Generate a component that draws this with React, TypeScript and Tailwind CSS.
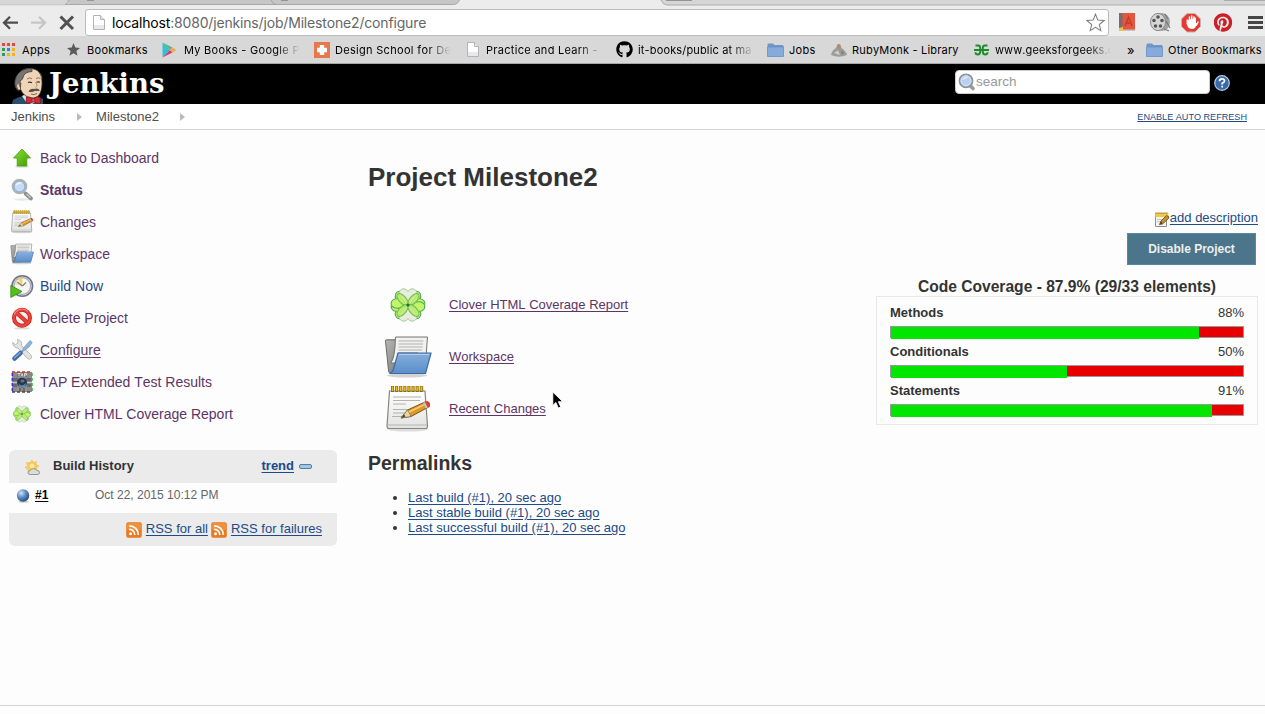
import React from "react";
import { FaGithub, FaPinterest } from "react-icons/fa";

const ArrowUp = () => (
  <svg viewBox="0 0 24 24" className="size-6">
    <defs>
      <linearGradient id="up" x1="0" y1="0" x2="1" y2="1">
        <stop offset="0" stopColor="#8ae234" />
        <stop offset="1" stopColor="#3f9a06" />
      </linearGradient>
    </defs>
    <ellipse cx="12" cy="20.5" rx="7" ry="1.3" fill="#ddd" />
    <path d="M12 3 L20.5 12 H16.8 V20 H7.2 V12 H3.5 Z" fill="url(#up)" stroke="#4e9a06" strokeWidth=".8" />
  </svg>
);

const Magnifier = ({ className }: { className: string }) => (
  <svg viewBox="0 0 24 24" className={className}>
    <ellipse cx="12" cy="21.5" rx="8" ry="1.2" fill="#e6e6e6" />
    <path d="M15.5 15.5 L21 20.5" stroke="#8d8f8a" strokeWidth="3.8" strokeLinecap="round" />
    <path d="M16.5 16 L20.6 19.8" stroke="#c9cbc6" strokeWidth="1.2" />
    <circle cx="9.5" cy="8.5" r="6.8" fill="#bcd6f2" stroke="#b0b2ae" strokeWidth="2" />
    <circle cx="9.5" cy="8.5" r="5.4" fill="#c6dcf5" stroke="#7fa2d0" strokeWidth=".9" />
    <path d="M5.5 8 A4.4 4.4 0 0 1 12.5 5 Q8 6 5.5 8Z" fill="#eef5fd" />
  </svg>
);

const SearchLens = () => (
  <svg viewBox="0 0 18 18" className="size-[18px]">
    <path d="M11.500 12 L15 15.500" stroke="#9b9c9a" strokeWidth="3.600" strokeLinecap="round" />
    <circle cx="8" cy="7.800" r="6.500" fill="#a9c8ef" stroke="#8e9396" strokeWidth="1.800" />
    <circle cx="8" cy="7.800" r="5" fill="#b5d2f5" stroke="#dfe9f5" strokeWidth="1" />
    <path d="M4.500 7 A4 4 0 0 1 10.500 4.500 Q7 5 4.500 7Z" fill="#e6f1fd" />
  </svg>
);

const Notepad = ({ className }: { className: string }) => (
  <svg viewBox="0 0 48 48" className={className}>
    <defs>
      <linearGradient id="paper" x1="0" y1="0" x2="0" y2="1">
        <stop offset="0" stopColor="#ffffff" />
        <stop offset="1" stopColor="#e2e2e0" />
      </linearGradient>
    </defs>
    <ellipse cx="24" cy="44.5" rx="20" ry="2" fill="#ddd" />
    <path d="M5.5 6 H41 L43.5 41 Q43.6 43.5 41.5 43.5 H5 Q3 43.5 3 41 Z" fill="url(#paper)" stroke="#858783" strokeWidth="1.2" />
    <path d="M3.5 40 H43" stroke="#b5b5b2" />
    <path d="M9 12H37M9 15.5H36M9 19H22M9 24.500H35M9 28H24M8 31.500H20" stroke="#b2b4b0" strokeWidth="1.1" />
    <path d="M7 4H40" stroke="#8f6d00" strokeWidth="6" strokeDasharray="3.100 1" />
    <path d="M7.800 3.800H40" stroke="#e3bd2c" strokeWidth="4.500" strokeDasharray="1.500 2.600" />
    <path d="M17 33 L23.500 25 L41 17 Q46 17 45.500 21.500 L27 31.500 Z" fill="#d99a28" stroke="#855016" />
    <path d="M17 33 L23.500 25 L25 27.500 L27 31.500Z" fill="#edd4a5" stroke="#6d6657" strokeWidth=".6" />
    <path d="M17 33 L20 29.500 L21.500 31.500Z" fill="#3a3a3a" />
    <path d="M40.500 17 L43.500 16 Q46.500 17 46 21 L43.500 22.800Z" fill="#e23c2a" />
    <path d="M38.800 18 L40.800 17 L43.800 22.500 L42 23.500Z" fill="#c3c6c8" />
    <path d="M25 27 L39.500 20" stroke="#f5cc72" strokeWidth="1.700" />
  </svg>
);

const EditNote = () => (
  <svg viewBox="0 0 16 16" className="mt-[3px] size-4">
    <path d="M1.500 1.500H12.500V14.500H1.500Z" fill="#f3f3f0" stroke="#8f918d" />
    <path d="M1 1.200H14.500V5H1.500Z" fill="#edc94a" />
    <path d="M1.500 1H14" stroke="#a97f10" strokeWidth="1.500" strokeDasharray="1 1" />
    <path d="M3 7.500H9M3 9.500H7" stroke="#bbb" strokeWidth=".8" />
    <path d="M5.500 12.500 L7 9 L12.500 3.500 Q15.500 4 14.500 6.500 L8.500 12Z" fill="#c98d35" stroke="#6b4a1c" strokeWidth=".8" />
    <path d="M5.500 12.500 L7 9 L8.800 11.500Z" fill="#4c4538" />
  </svg>
);

const Folder = ({ className }: { className: string }) => (
  <svg viewBox="0 0 48 48" className={className}>
    <defs>
      <linearGradient id="blue" x1="0" y1="0" x2="0" y2="1">
        <stop offset="0" stopColor="#86aedb" />
        <stop offset="1" stopColor="#5b8ecb" />
      </linearGradient>
      <linearGradient id="grey" x1="0" y1="0" x2="1" y2="1">
        <stop offset="0" stopColor="#b9bab8" />
        <stop offset="1" stopColor="#727471" />
      </linearGradient>
    </defs>
    <ellipse cx="23" cy="42.500" rx="20" ry="2" fill="#d4d4d4" />
    <path d="M1.500 8 Q1.500 6.800 2.800 6.800 L14 6.800 L15 5 H21 V40 H6.500 Q4.800 40 4.600 38.500Z" fill="url(#grey)" stroke="#686a67" />
    <path d="M11.500 4 H43.500 L42 24 L40 30 H6.500 Q11 26 11.500 4Z" fill="#f1f1f0" stroke="#737572" />
    <path d="M14.500 8H39.500M14.500 11H39M14.500 14H38.500M14.500 17H38M14 19.500H34" stroke="#b1b3af" strokeWidth="1.200" />
    <path d="M14 20 H47 L41.500 40.500 H5.500 Q9 39 9.800 35 Z" fill="url(#blue)" stroke="#3c6ba5" strokeWidth="1.200" />
    <path d="M15 21.500H45" stroke="#b3cdea" />
  </svg>
);

const BuildNow = () => (
  <svg viewBox="0 0 24 24" className="size-6">
    <circle cx="12.300" cy="12" r="10.300" fill="#d9dae2" stroke="#6f7284" strokeWidth="1.500" />
    <circle cx="12.300" cy="12" r="8.300" fill="#f6f6f1" stroke="#a9abbb" strokeWidth="1.200" />
    <path d="M12.300 12 L8 4.800 Q10 3.800 12.300 3.800Z" fill="#f0d35c" />
    <path d="M12.300 12 L4.500 10 L6.500 6.300Z" fill="#e9dfae" />
    <path d="M12.300 12 L16 8.500 M12.300 12 L7.500 8" stroke="#7c7d78" strokeWidth="1.200" />
    <path d="M.8 11.500 L12 17.500 L.8 23.500Z" fill="#55bf1c" stroke="#398a0b" strokeWidth=".8" />
  </svg>
);

const Forbidden = () => (
  <svg viewBox="0 0 24 24" className="size-6">
    <ellipse cx="12" cy="22.300" rx="8" ry="1.200" fill="#ddd" />
    <circle cx="12" cy="11.800" r="8" fill="#f3eeee" stroke="#c41e17" strokeWidth="4" />
    <path d="M6.500 6.800 L17.500 16.800" stroke="#c41e17" strokeWidth="4" />
    <circle cx="12" cy="11.800" r="8" fill="none" stroke="#e8443b" strokeWidth="2.600" />
    <path d="M6.500 6.800 L17.500 16.800" stroke="#e8443b" strokeWidth="2.600" />
    <path d="M4.300 8.500 A8.300 8.300 0 0 1 18 5.500" fill="none" stroke="#f48b85" strokeWidth="1.200" />
  </svg>
);

const Tools = () => (
  <svg viewBox="0 0 24 24" className="size-6">
    <path d="M2.500 4.500 L5.500 6.500 L8 5 L7.500 1.500 Q12.500 2.500 11.500 7.500 L20.500 16.500 Q23 19.500 20.500 21 Q18.500 22 16.500 19.500 L8 10 Q3.500 10 2.500 4.500Z" fill="#e2e4e1" stroke="#a9aba7" strokeWidth=".8" />
    <path d="M20 2.500 L22.300 4.500 L19 9 L14.500 12.500 L12.800 11 L16.500 6.500Z" fill="#8fb2da" stroke="#7692b8" strokeWidth=".7" />
    <path d="M13.500 12 L9 16.500" stroke="#8b9fb5" strokeWidth="1.800" />
    <path d="M10.500 15 L4.500 20.500" stroke="#426fa6" strokeWidth="4.600" strokeLinecap="round" />
    <path d="M10 14.800 L4.500 19.800" stroke="#7fa7d6" strokeWidth="1.500" strokeLinecap="round" />
  </svg>
);

const Tap = () => (
  <svg viewBox="0 0 24 24" className="size-6">
    <rect x="2" y="2" width="20" height="20" fill="#8b8b8b" />
    <path d="M3 8h5v3H3zM16 8h5v3h-5zM3 14h4v3H3zM17 14h4v3h-4zM7 18h4v3H7zM13 18h4v3h-4z" fill="#686868" />
    <path d="M2 12.500h5M17 12.500h5M8 21v-3M16 21v-3" stroke="#c4c4c4" />
    <rect x="7" y="2.500" width="10" height="4.500" fill="#777" />
    <path d="M7.500 3.500h3M9 3.500v3M11 6.500l1-3 1 3M14.500 6.500v-3h2v1.500h-2" stroke="#eee" strokeWidth=".8" fill="none" />
    <ellipse cx="12" cy="12.500" rx="5" ry="4.800" fill="#203955" />
    <ellipse cx="12.500" cy="11" rx="2" ry="1.500" fill="#7f6c68" />
    <path d="M8.500 13.500 Q12 17.500 16 13 L15 17 H9.500Z" fill="#6289b0" />
    <path d="M2 2H22" stroke="#d4322a" strokeWidth="1.500" strokeDasharray="3 2" />
    <path d="M2 22H22" stroke="#444" strokeWidth="1.300" strokeDasharray="3 2" />
    <path d="M2.300 3V22" stroke="#3434d8" strokeWidth="1.500" strokeDasharray="3 2" />
    <path d="M22 3V22" stroke="#2cb834" strokeWidth="1.500" strokeDasharray="3 2" />
  </svg>
);

const Leaf = ({ turn, fill, stroke }: { turn: number; fill: string; stroke: string }) => (
  <path
    transform={`rotate(${turn} 24 24)`}
    d="M24 24 C17 19 14 14 15.500 10.500 C17.500 6.500 22.500 7.500 24 10.500 C25.500 7.500 30.500 6.500 32.500 10.500 C34 14 31 19 24 24Z"
    fill={fill}
    stroke={stroke}
    strokeWidth="1"
  />
);

const Clover = ({ className }: { className: string }) => (
  <svg viewBox="0 0 48 48" className={className}>
    {[62, 118, 242, 298].map((a) => (
      <Leaf key={a} turn={a} fill="#c3f56b" stroke="#4fa84e" />
    ))}
    {[0, 180].map((a) => (
      <Leaf key={a} turn={a} fill="#e7edda" stroke="#9cca9e" />
    ))}
    <g fill="#bdeb6c" fillOpacity=".8" stroke="#69bb55" strokeWidth="1">
      <ellipse cx="18.500" cy="18.500" rx="3.600" ry="7.200" transform="rotate(-42 18.500 18.500)" />
      <ellipse cx="29.500" cy="18.500" rx="3.600" ry="7.200" transform="rotate(42 29.500 18.500)" />
      <ellipse cx="18.500" cy="29.500" rx="3.600" ry="7.200" transform="rotate(42 18.500 29.500)" />
      <ellipse cx="29.500" cy="29.500" rx="3.600" ry="7.200" transform="rotate(-42 29.500 29.500)" />
    </g>
    <circle cx="24" cy="24" r="1.600" fill="#177b2c" />
  </svg>
);

const Rss = () => (
  <svg viewBox="0 0 16 16" className="size-4">
    <rect x=".2" y=".2" width="15.600" height="15.600" rx="2" fill="#e87a22" />
    <rect x="1" y="1" width="14" height="7" rx="2" fill="#f1a04d" opacity=".6" />
    <circle cx="4.500" cy="11.700" r="1.500" fill="#fff" />
    <path d="M3.200 7.300 A5.600 5.600 0 0 1 8.800 12.900M3.200 3.800 A9.100 9.100 0 0 1 12.300 12.900" fill="none" stroke="#fff" strokeWidth="1.700" />
  </svg>
);

const Weather = () => (
  <svg viewBox="0 0 16 16" className="mt-[2px] size-4">
    <path d="M7 0 L8.300 2.500 L11.500 1.500 L11 4.500 L14 6 L11.500 8 L12 11 H3 L2.500 9 L0 7.500 L2.300 5.700 L1.500 2.500 L5 2.700Z" fill="#f7d168" stroke="#eeb53f" strokeWidth=".5" />
    <circle cx="7" cy="6" r="3.200" fill="#fce99b" stroke="#eeb437" strokeWidth=".8" />
    <path d="M5 14.500 Q3 14.500 3 12.500 Q3 10.800 5 10.800 Q6 8.300 8.500 8.800 Q11 8.300 11.800 10.500 Q14.500 10.300 14.500 12.600 Q14.500 14.500 12.500 14.500Z" fill="#dcdddb" stroke="#8a8c88" strokeWidth=".9" />
  </svg>
);

const Ball = () => (
  <svg viewBox="0 0 16 16" className="size-[15px]">
    <defs>
      <radialGradient id="ball" cx=".35" cy=".3" r=".75">
        <stop offset="0" stopColor="#d4e5f7" />
        <stop offset=".4" stopColor="#6f9bd0" />
        <stop offset="1" stopColor="#1f4679" />
      </radialGradient>
    </defs>
    <ellipse cx="8" cy="14.500" rx="5.500" ry="1.300" fill="#ccc" />
    <circle cx="7.500" cy="8" r="6.600" fill="url(#ball)" />
  </svg>
);

const Head = () => (
  <svg viewBox="0 0 34 36" className="h-9 w-[34px]">
    <path d="M0 36 L1 32 Q6 29 11 28 L26 29 L31 31 L31 36Z" fill="#294f6c" />
    <path d="M10 28 L14 34 L20 36 L25 33 L26 28 L18 24Z" fill="#dfe3e4" />
    <path d="M5 11 C6 3 12 .5 18 .5 C26 .5 30 6 30 13 C30.500 22 28 30 21 30 C14 30 9 25 8 19Z" fill="#efd5b5" stroke="#39322c" strokeWidth=".8" />
    <path d="M20 .5 C10 0 3 6 2.800 15 Q3 21 6.500 22.500 L8.500 19 Q9.500 15 7.800 13 Q11 12 11.500 8 Q13 4 20 3.500Z" fill="#777472" stroke="#3f3d3b" strokeWidth=".8" />
    <path d="M27 4 Q31 7 30 13 L28.500 8Z" fill="#6d6a67" />
    <path d="M6 15 Q3.500 17 5.500 21 Q7 23 8.500 21.500" fill="#efd5b5" stroke="#5b4a3b" strokeWidth=".7" />
    <path d="M15 11 Q18 8.800 20 10.800M24 10.500 Q26.500 9 28.500 10.500" fill="none" stroke="#6b5b4b" strokeWidth=".8" />
    <path d="M16 14.500 Q18 13.500 20 14.800M24.500 14.300 Q26 13.500 28 14.300" fill="none" stroke="#3b332b" strokeWidth="1.200" />
    <path d="M23.500 14 Q26.500 18 23.500 19.500" fill="none" stroke="#b38f6b" strokeWidth="1" />
    <path d="M16.500 23.500 Q18 20 22 21 Q26 19.500 28 22.500 Q25 23.500 23 22.800 Q20 25 16.500 23.500Z" fill="#54504c" />
    <path d="M19 26 Q22 27.500 25 25.500" fill="none" stroke="#69493a" strokeWidth=".8" />
    <path d="M14.500 29 Q18 28.500 21 31 Q24 28 28 29 L28.500 35.500 Q24 36 21.500 33.500 Q18 36 14 35Z" fill="#d62b35" stroke="#761a20" strokeWidth=".8" />
    <circle cx="21.300" cy="32.300" r="1.900" fill="#e8444c" stroke="#761a20" strokeWidth=".6" />
  </svg>
);

const Page = ({ className }: { className: string }) => (
  <svg viewBox="0 0 12 15" className={className}>
    <path d="M.5 .5H7.500L11.500 4.500V14.500H.5Z" fill="#fdfdfd" stroke="#b3b3b3" />
    <path d="M7.500 .5V4.500H11.500" fill="#e9e9e9" stroke="#b3b3b3" />
    <path d="M1 10H11V14H1Z" fill="#e6e8ec" />
  </svg>
);

const MacFolder = () => (
  <svg viewBox="0 0 17 14" className="h-[14px] w-[17px]">
    <path d="M.5 1.500Q.5.5 1.500.5H6L7.500 2H15.500Q16.500 2 16.500 3V13.500H.5Z" fill="#6f96c8" />
    <path d="M.5 4H16.500V13.500H.5Z" fill="#84abdb" stroke="#6690c6" strokeWidth=".7" />
  </svg>
);

const AppsGrid = () => {
  const c = ["#e8453c", "#e8453c", "#e8453c", "#2e9e4f", "#3b7de8", "#f2b50f", "#2e9e4f", "#f2b50f", "#f2b50f"];
  return (
    <svg viewBox="0 0 13 13" className="size-[13px]">
      {c.map((f, i) => (
        <rect key={i} x={(i % 3) * 5} y={Math.floor(i / 3) * 5} width="3" height="3" fill={f} />
      ))}
    </svg>
  );
};

const Play = () => (
  <svg viewBox="0 0 15 16" className="h-4 w-[15px]">
    <path d="M.5 .5V15.500L8 8Z" fill="#35c1d2" />
    <path d="M.5 .5L8 8L10.500 5.500Z" fill="#59b583" />
    <path d="M.5 15.500L8 8L10.500 10.500Z" fill="#d83a6a" />
    <path d="M10.500 5.500L14.500 8L10.500 10.500L8 8Z" fill="#f2a553" />
  </svg>
);

const Cross = () => (
  <svg viewBox="0 0 16 16" className="size-4">
    <rect width="16" height="16" fill="#e8774c" />
    <path d="M5.800 3H10.200V5.800H13V10.200H10.200V13H5.800V10.200H3V5.800H5.800Z" fill="#fff" />
  </svg>
);

const Star = () => (
  <svg viewBox="0 0 24 24" className="size-[13px]">
    <path d="M12 0L15.300 8.300L24 9L17.300 14.800L19.500 23.500L12 18.700L4.500 23.500L6.700 14.800L0 9L8.700 8.300Z" fill="#5b5b5b" />
  </svg>
);

const Monk = () => (
  <svg viewBox="0 0 16 14" className="h-[14px] w-4">
    <path d="M0 12 Q1 7 5 5 L6.500 1 H9 L10.500 5 Q15 8 16 12 Q8 15.500 0 12Z" fill="#9c9c9a" />
    <path d="M6 3 Q8 0 10 3 L9 6 H7Z" fill="#b58b66" />
    <path d="M3 10 L7 7.500 L9 12Z" fill="#d1d0cc" />
    <path d="M10 7 L13 10 L11 12Z" fill="#7a7a78" />
  </svg>
);

const Geeks = () => (
  <svg viewBox="0 0 15 12" className="h-3 w-[15px]">
    <path d="M1.500 1.500H4.200Q6.200 1.500 6.200 4V7.500Q6.200 10.500 3.800 10.500Q1.500 10.500 1.500 8.200M0 6H15M13.500 1.500H10.800Q8.800 1.500 8.800 4V7.500Q8.800 10.500 11.200 10.500Q13.500 10.500 13.500 8.200" fill="none" stroke="#1d8a2b" strokeWidth="1.900" />
  </svg>
);

const plain = "w-[116px]";
const faded = "w-[116px] [mask-image:linear-gradient(to_right,black_80%,transparent_100%)]";

const bookmarks = [
  { icon: <AppsGrid />, label: "Apps", box: "w-[65px]", iconBox: "w-[20px]", text: "w-[40px]" },
  { icon: <Star />, label: "Bookmarks", box: "w-[95px]", iconBox: "w-[20px]", text: "w-[70px]" },
  { icon: <Play />, label: "My Books - Google P", box: "w-[152px]", iconBox: "w-[22px]", text: faded },
  { icon: <Cross />, label: "Design School for De", box: "w-[153px]", iconBox: "w-[21px]", text: faded },
  { icon: <Page className="h-[15px] w-3" />, label: "Practice and Learn -", box: "w-[149px]", iconBox: "w-[19px]", text: faded },
  { icon: <FaGithub className="size-[17px] text-black" />, label: "it-books/public at ma", box: "w-[151px]", iconBox: "w-[22px]", text: faded + " tracking-[0.15px]" },
  { icon: <MacFolder />, label: "Jobs", box: "w-[64px]", iconBox: "w-[22px]", text: "w-[40px]" },
  { icon: <Monk />, label: "RubyMonk - Library", box: "w-[143px]", iconBox: "w-[21px]", text: plain + " tracking-[0.2px]" },
  { icon: <Geeks />, label: "www.geeksforgeeks.c", box: "w-[153px]", iconBox: "w-[21px]", text: faded + " tracking-[0.1px]" },
];

const tasks = [
  { icon: <ArrowUp />, label: "Back to Dashboard", style: "text-[#5c3566]" },
  { icon: <Magnifier className="size-6" />, label: "Status", style: "text-[#5c3566] font-bold" },
  { icon: <Notepad className="size-6" />, label: "Changes", style: "text-[#5c3566]" },
  { icon: <Folder className="size-6" />, label: "Workspace", style: "text-[#5c3566]" },
  { icon: <BuildNow />, label: "Build Now", style: "text-[#204a87]" },
  { icon: <Forbidden />, label: "Delete Project", style: "text-[#5c3566]" },
  { icon: <Tools />, label: "Configure", style: "text-[#5c3566] underline underline-offset-2" },
  { icon: <Tap />, label: "TAP Extended Test Results", style: "text-[#5c3566]" },
  { icon: <Clover className="size-6" />, label: "Clover HTML Coverage Report", style: "text-[#5c3566]" },
];

const coverage = [
  { name: "Methods", label: "88%", px: 308 },
  { name: "Conditionals", label: "50%", px: 176 },
  { name: "Statements", label: "91%", px: 321 },
];

function Chrome() {
  return (
    <div className="h-16 overflow-hidden bg-[#d8d8d8] font-['Inter',sans-serif]">
      <svg viewBox="0 0 1265 9" className="block h-[9px] w-[1265px]">
        <rect width="1265" height="9" fill="#d6d6d6" />
        <path d="M67 0H460L455 5H70Z" fill="#c6c6c6" />
        <path d="M0 5H455Q458 4 460 0H661Q663 5 667 5H1265V9H0Z" fill="#ececec" />
        <path d="M0 4.800H66" stroke="#c4c4c4" strokeWidth=".8" />
        <path d="M69 0Q68 3.500 65 4.500H452Q458 4.500 459.500 0M661 0Q663 5 667 5H1265M271 0Q272 3.500 276 4.500M1224 .5H1265" fill="none" stroke="#a6a6a6" strokeWidth=".9" />
        <path d="M666 .5H692M87 .500H94M281 .5H288" stroke="#949494" />
      </svg>
      <div className="flex h-[27px] items-center bg-[#ececec]">
        <svg viewBox="0 0 85 27" className="h-[27px] w-[85px] shrink-0">
          <path d="M4 13.700H18M10 7.700L4 13.700L10 19.700" fill="none" stroke="#4f4f4f" strokeWidth="2.300" />
          <path d="M31 13.700H45M39 7.700L45 13.700L39 19.700" fill="none" stroke="#c6c6c6" strokeWidth="2.300" />
          <path d="M60.500 7.500L73 20M73 7.500L60.500 20" stroke="#505050" strokeWidth="3" />
        </svg>
        <div className="flex h-[27px] w-[1024px] shrink-0 items-center rounded-[3px] border border-[#bcbcbc] bg-white pl-[7px] text-[14px] leading-[25px]">
          <Page className="h-[15px] w-3" />
          <span className="ml-[7px] w-[974px] shrink-0 whitespace-nowrap tracking-[-0.170px] text-[#666]"><span className="text-black">localhost</span>:8080/jenkins/job/Milestone2/configure</span>
          <svg viewBox="0 0 24 24" className="size-[19px] shrink-0">
            <path d="M12 1.500L15 9L22.800 9.500L16.800 14.600L18.700 22.200L12 18L5.300 22.200L7.200 14.600L1.200 9.500L9 9Z" fill="#fff" stroke="#7c7c7c" strokeWidth="1.300" />
          </svg>
        </div>
        <svg viewBox="0 0 156 27" className="h-[27px] w-[156px] shrink-0">
          <rect x="10" y="4" width="16" height="18" fill="#e4573f" />
          <rect x="10" y="4" width="3.500" height="15" fill="#7b6b71" />
          <path d="M10 19L14 18L14 22H10Z" fill="#f4c33c" />
          <path d="M13.500 20.500H26V22H13.500Z" fill="#c8c3c0" />
          <path d="M16 17L19.500 8L23 17M17 14H22" fill="none" stroke="#c43c2a" strokeWidth="1.500" />
          <ellipse cx="53" cy="13" rx="8" ry="9" fill="#a3a3a3" />
          <ellipse cx="49" cy="13" rx="7.500" ry="8.600" fill="#d6d6d6" stroke="#888" />
          <g fill="#555"><circle cx="49" cy="8" r="1.800" /><circle cx="45" cy="11.500" r="1.800" /><circle cx="53" cy="11.500" r="1.800" /><circle cx="46.500" cy="17" r="1.800" /><circle cx="51.500" cy="17" r="1.800" /></g>
          <path d="M55 20L60 22M56 5L59 10M57 12L61 19" stroke="#777" strokeWidth="1.200" />
          <path d="M78.500 4.500H86.500L92 10V17.500L86.500 23H78.500L73 17.500V10Z" transform="translate(-.5 0)" fill="#e63a32" stroke="#c4b4b4" strokeWidth="1" />
          <path d="M78 11.500V15.500Q79 20 83 20Q86 20 87 17L88.500 14L87 14.500V8.500" fill="#fff" />
          <path d="M78.300 11V15M80.500 14V8M82.700 13.500V7M85 13.500V8M87.500 16L89 13" fill="none" stroke="#fff" strokeWidth="1.500" strokeLinecap="round" />
          <g transform="translate(104.500 4)">
            <FaPinterest size={19} color="#cb2027" />
          </g>
          <path d="M139 8.500H154M139 13.500H154M139 18.500H154" stroke="#454545" strokeWidth="3" />
        </svg>
      </div>
      <div className="flex h-7 items-center border-b border-[#a8a8a8] bg-[#d8d8d8] pl-[2px] text-[11px] leading-[16px] tracking-[0.3px] text-black">
        {bookmarks.map((b) => (
          <div key={b.label} className={`flex shrink-0 items-center ${b.box}`}>
            <div className={`flex shrink-0 items-center ${b.iconBox}`}>{b.icon}</div>
            <span className={`block shrink-0 whitespace-nowrap ${b.text}`}>{b.label}</span>
          </div>
        ))}
        <span className="w-[19px] shrink-0 text-[13px]">»</span>
        <div className="w-[22px] shrink-0"><MacFolder /></div>
        <span className="whitespace-nowrap tracking-[0.230px]">Other Bookmarks</span>
      </div>
    </div>
  );
}

function Sidebar() {
  return (
    <aside className="w-[368px] shrink-0 pt-3">
      <ul>
        {tasks.map((t) => (
          <li key={t.label} className="flex h-8 items-center pl-[10px]">
            {t.icon}
            <a className={`ml-[6px] text-[14px] leading-8 ${t.style}`}>{t.label}</a>
          </li>
        ))}
      </ul>
      <section className="ml-[9px] mt-5 w-[328px] overflow-hidden rounded-md bg-[#ebebeb]">
        <div className="flex h-[33px] items-center pl-4 pr-[25px]">
          <Weather />
          <b className="-mt-[2px] ml-3 flex-1 leading-[31px]">Build History</b>
          <a className="-mt-[2px] font-bold leading-[31px] text-[#204a87] underline underline-offset-2">trend</a>
          <div className="ml-[5px] h-[5px] w-[13px] rounded-[2px] border border-[#4d7fa8] bg-[#a6c4dc]" />
        </div>
        <div className="flex h-[30px] bg-[#fdfdfd] pl-[7px] pt-[5px] leading-[15px]">
          <Ball />
          <a className="ml-1 w-[60px] text-[12px] font-bold text-black underline underline-offset-2">#1</a>
          <span className="text-[12px] text-[#666]">Oct 22, 2015 10:12 PM</span>
        </div>
        <div className="flex h-[33px] items-center justify-end pr-[15px] leading-[31px] text-[#204a87]">
          <Rss />
          <a className="-mt-[2px] ml-1 mr-[3px] underline underline-offset-2">RSS for all</a>
          <Rss />
          <a className="-mt-[2px] ml-1 underline underline-offset-2">RSS for failures</a>
        </div>
      </section>
    </aside>
  );
}

export default function App() {
  return (
    <div className="relative h-[714px] w-[1265px] overflow-hidden bg-[#fdfdfd] font-['Liberation_Sans',Arial,sans-serif] text-[13px] text-[#333] [font-kerning:none]">
      <Chrome />
      <header className="flex h-10 items-center bg-black pl-[12px]">
        <div className="mt-1"><Head /></div>
        <span className="-mt-[3px] ml-[3px] flex-1 font-['DejaVu_Serif',serif] text-[27.500px] font-bold leading-[36px] text-white">Jenkins</span>
        <div className="mb-[4px] flex h-6 w-[255px] items-center rounded-[4px] border border-[#ccc] bg-white pl-[2px]">
          <SearchLens />
          <span className="text-[13.500px] text-[#999]">search</span>
        </div>
        <svg viewBox="0 0 16 16" className="mb-[2px] ml-1 mr-[35px] size-4">
          <circle cx="8" cy="8" r="7.300" fill="#3a6aa8" stroke="#b5cce8" strokeWidth="1.200" />
          <path d="M5.500 6.200Q5.500 3.800 8 3.800Q10.500 3.800 10.500 6Q10.500 7.300 8.200 8.300V9.500M8.200 10.800V12.500" fill="none" stroke="#fff" strokeWidth="1.700" />
        </svg>
      </header>
      <nav className="flex h-[26px] items-center border-b border-[#d3d3d3] bg-white pl-[11px] pr-[18px] leading-[24px] text-[#4d4d4d]">
        <span>Jenkins</span>
        <svg viewBox="0 0 5 8" className="ml-[22px] mr-[14px] h-2 w-[5px]"><path d="M0 0L5 4L0 8Z" fill="#bbb" /></svg>
        <span>Milestone2</span>
        <svg viewBox="0 0 5 8" className="ml-[21px] h-2 w-[5px]"><path d="M0 0L5 4L0 8Z" fill="#bbb" /></svg>
        <a className="ml-auto text-[9.100px] text-[#204a87] underline underline-offset-1">ENABLE AUTO REFRESH</a>
      </nav>
      <div className="flex h-[576px] border-b border-[#d3d3d3]">
        <Sidebar />
        <main className="flex-1 pt-8">
          <h1 className="text-[26px] font-bold leading-[30px]">Project Milestone2</h1>
          <div className="mt-[89px] flex flex-col gap-1 pl-4 text-[#5c3566] underline underline-offset-2">
            <div className="flex h-12 items-center gap-[17px]"><Clover className="size-12" /><a>Clover HTML Coverage Report</a></div>
            <div className="flex h-12 items-center gap-[17px]"><Folder className="size-12" /><a>Workspace</a></div>
            <div className="flex h-12 items-center gap-[17px]"><Notepad className="size-12" /><a>Recent Changes</a></div>
          </div>
          <h2 className="mt-[18px] text-[19.500px] font-bold leading-[24px]">Permalinks</h2>
          <ul className="mt-[15px] list-disc pl-10 leading-[15px]">
            <li><a className="text-[#204a87] underline underline-offset-2">Last build (#1), 20 sec ago</a></li>
            <li><a className="text-[#204a87] underline underline-offset-2">Last stable build (#1), 20 sec ago</a></li>
            <li><a className="text-[#204a87] underline underline-offset-2">Last successful build (#1), 20 sec ago</a></li>
          </ul>
        </main>
        <section className="mr-[7px] w-[382px] shrink-0 pt-20">
          <div className="flex h-[16px] items-center justify-end leading-[16px]">
            <EditNote />
            <a className="text-[#204a87] underline underline-offset-2">add description</a>
          </div>
          <div className="mt-[7px] flex justify-end pr-[2px]">
            <button className="h-8 w-[129px] border border-[#5788a3] bg-[#4b758b] text-[12px] font-bold text-[#eee]">Disable Project</button>
          </div>
          <h3 className="mt-[13px] text-center text-[15.600px] font-bold leading-[18px]">Code Coverage - 87.9% (29/33 elements)</h3>
          <div className="h-[129px] border border-[#e8e8e8] px-[13px] pt-2">
            {coverage.map((c) => (
              <div key={c.name} className="h-[39px]">
                <div className="flex h-[21px] justify-between leading-[16px]"><b>{c.name}</b><span>{c.label}</span></div>
                <div className="h-3 border border-[#999] bg-[#e60000]">
                  <div className="h-3 bg-[#00e600]" style={{ width: c.px }} />
                </div>
              </div>
            ))}
          </div>
        </section>
      </div>
      <svg viewBox="0 0 12 18" className="absolute left-[552px] top-[391px] h-[18px] w-3">
        <path d="M.8 1V14.500L3.900 11.500L6.300 17L8.800 16L6.400 10.700H10.800Z" fill="#000" stroke="#fff" strokeWidth=".9" />
      </svg>
    </div>
  );
}
